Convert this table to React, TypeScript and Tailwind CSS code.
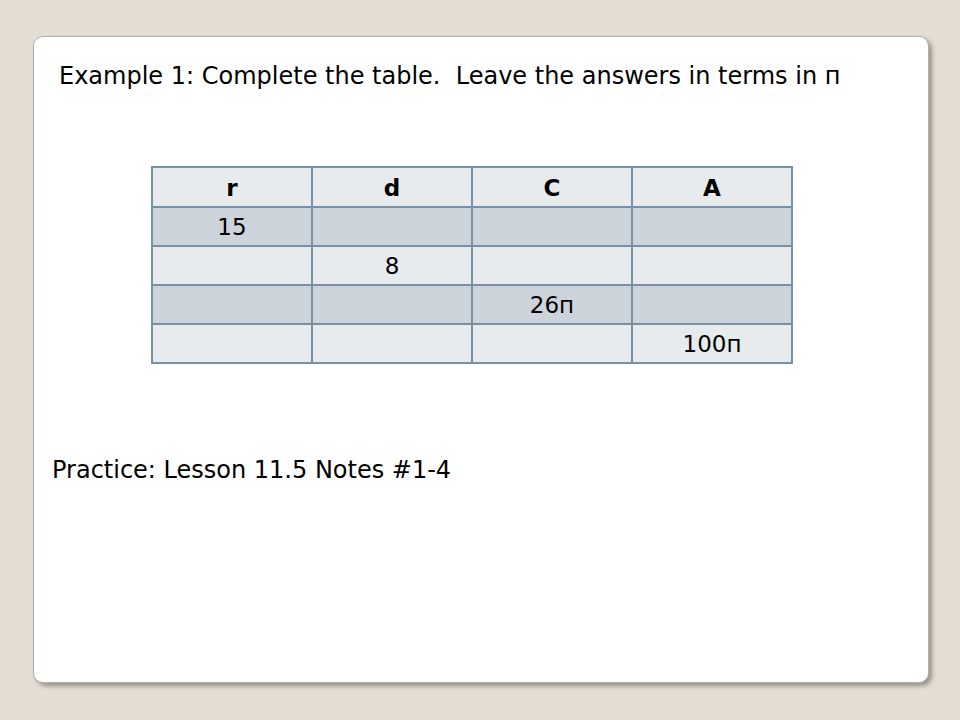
const rows = [
  ["15", "", "", ""],
  ["", "8", "", ""],
  ["", "", "26п", ""],
  ["", "", "", "100п"],
]

export default function App() {
  return (
    <div className="w-[960px] h-[720px] bg-[#e4ddd3] pt-[36px] pl-[33px] overflow-hidden" style={{ fontFamily: '"DejaVu Sans", Verdana, sans-serif' }}>
      <div className="relative w-[896px] h-[647px] bg-white rounded-[10px] border border-[#b5b0a8] shadow-[3px_3px_4px_rgba(90,85,75,0.55)] text-black">
        <p className="ml-[25px] mt-[25px] text-[24px] leading-[28px] whitespace-pre">
          Example 1: Complete the table.  Leave the answers in terms in п
        </p>

        <table className="ml-[117px] mt-[76px] border-collapse text-[23px] leading-[26px]">
          <thead>
            <tr className="bg-[#e8ebee]">
              {["r", "d", "C", "A"].map((h) => (
                <th key={h} className="w-[160px] h-[40px] border-2 border-[#7890a4] font-bold text-[23px] leading-[26px] text-center align-bottom pb-[5px]">
                  {h}
                </th>
              ))}
            </tr>
          </thead>
          <tbody>
            {rows.map((row, i) => (
              <tr key={i} className={i % 2 === 0 ? "bg-[#cdd3da]" : "bg-[#e8ebee]"}>
                {row.map((cell, j) => (
                  <td key={j} className="w-[160px] h-[39px] border-2 border-[#7890a4] text-center align-bottom pb-[5px]">
                    {cell}
                  </td>
                ))}
              </tr>
            ))}
          </tbody>
        </table>

        <p className="ml-[18px] mt-[92px] text-[24px] leading-[28px]">Practice: Lesson 11.5 Notes #1-4</p>
      </div>
    </div>
  )
}
